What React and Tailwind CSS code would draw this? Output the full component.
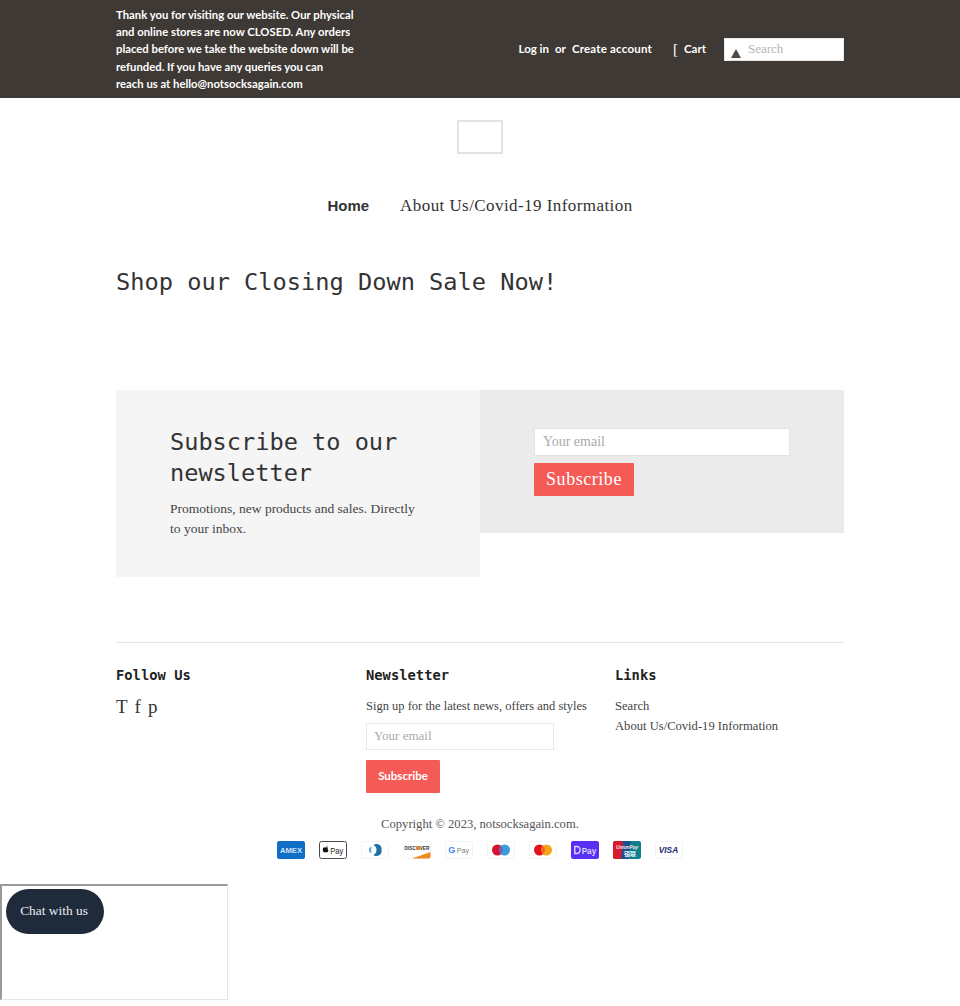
const serif = "font-['Liberation_Serif',serif]";
const mono = "font-['DejaVu_Sans_Mono',monospace]";
const sans = "font-['Lato','Open_Sans',sans-serif]";

function Card({ children }) {
  return <svg width="28" height="18" viewBox="0 0 28 18" className="block">{children}</svg>;
}

const cardBase = <rect x="0.5" y="0.5" width="27" height="17" rx="2" fill="#fff" stroke="#f3f3f3" />;

function Amex() {
  return (
    <Card>
      <rect width="28" height="18" rx="2" fill="#0f6fc6" />
      <text x="3" y="11.8" textLength="22" lengthAdjust="spacingAndGlyphs" fontSize="7.6" fontWeight="700" fill="#cfe3f7" fontFamily="Liberation Sans">AMEX</text>
    </Card>
  );
}
function ApplePay() {
  return (
    <Card>
      <rect x="0.5" y="0.5" width="27" height="17" rx="2" fill="#fff" stroke="#4a4a4a" />
      <path d="M7.4 6.2c.8 0 1.300.4 1.800.4-.8.6-.8 2.400.3 2.900-.4 1-1 1.900-1.600 1.900-.5 0-.7-.3-1.200-.3s-.7.3-1.200.3c-.9 0-1.700-1.600-1.700-2.900 0-1.400.9-2.200 1.800-2.200.6 0 .9.300 1.200.300z" fill="#111" />
      <path d="M7.400 5.900c0-.7.500-1.200 1.100-1.300 0 .7-.5 1.300-1.100 1.300z" fill="#111" />
      <text x="11.300" y="12.700" textLength="13" lengthAdjust="spacingAndGlyphs" fontSize="9.500" fill="#222" fontFamily="Liberation Sans">Pay</text>
    </Card>
  );
}
function Diners() {
  return (
    <Card>
      {cardBase}
      <path d="M10.300 5.200a4.200 4.200 0 0 0 0 7.600z" fill="#6fa7d1" />
      <path d="M12.500 4.100a5 5 0 0 1 8 4.900 5 5 0 0 1-8 4.900 5.500 5.500 0 0 0 0-9.800z" fill="#1f6ea8" />
    </Card>
  );
}
function Discover() {
  return (
    <Card>
      {cardBase}
      <path d="M9 17.500 27.500 11V15.500a2 2 0 0 1-2 2z" fill="#ef8a23" />
      <text x="1.500" y="8.700" textLength="25" lengthAdjust="spacingAndGlyphs" fontSize="4.900" fontWeight="700" fill="#333" fontFamily="Liberation Sans">DISCOVER</text>
      <circle cx="15.800" cy="7" r="2" fill="#ef8a23" />
    </Card>
  );
}
function GPay() {
  return (
    <Card>
      {cardBase}
      <text x="3.300" y="12" fontSize="9" fontWeight="700" fill="#4285f4" fontFamily="Liberation Sans">G</text>
      <text x="11.700" y="12" textLength="12.300" lengthAdjust="spacingAndGlyphs" fontSize="8" fill="#7a7f87" fontFamily="Liberation Sans">Pay</text>
    </Card>
  );
}
function Maestro() {
  return (
    <Card>
      {cardBase}
      <circle cx="10.500" cy="9" r="5.500" fill="#d8102c" />
      <circle cx="17.500" cy="9" r="5.500" fill="#3a9be0" />
      <path d="M14 4.800a5.500 5.500 0 0 1 0 8.400 5.500 5.500 0 0 1 0-8.400z" fill="#7a5fb0" />
    </Card>
  );
}
function Master() {
  return (
    <Card>
      {cardBase}
      <circle cx="10.500" cy="9" r="5.500" fill="#e3101e" />
      <circle cx="17.500" cy="9" r="5.500" fill="#f7a21b" />
      <path d="M14 4.800a5.500 5.500 0 0 1 0 8.400 5.500 5.500 0 0 1 0-8.400z" fill="#f4641c" />
    </Card>
  );
}
function ShopPay() {
  return (
    <Card>
      <rect width="28" height="18" rx="2" fill="#5a31f4" />
      <path d="M3.800 5.500h2a3.300 3.500 0 0 1 0 7h-2z" fill="none" stroke="#dcd5fd" strokeWidth="1.400" />
      <text x="10.700" y="12.500" textLength="14.500" lengthAdjust="spacingAndGlyphs" fontSize="8.800" fontWeight="700" fill="#dcd5fd" fontFamily="Liberation Sans">Pay</text>
    </Card>
  );
}
function UnionPay() {
  return (
    <Card>
      <rect width="28" height="18" rx="2" fill="#0f7f8c" />
      <path d="M2 0h10l-3 18H2a2 2 0 0 1-2-2V2a2 2 0 0 1 2-2z" fill="#d8192f" />
      <path d="M10 0h8l-3 18H8z" fill="#1c4f8f" />
      <text x="14" y="7.500" textAnchor="middle" fontSize="4.800" fontWeight="700" fontStyle="italic" fill="#fde2e2" fontFamily="Liberation Sans">UnionPay</text>
      <text x="17" y="14.500" textAnchor="middle" fontSize="6" fontWeight="700" fill="#e6f7f7" fontFamily="Noto Sans CJK SC">银联</text>
    </Card>
  );
}
function Visa() {
  return (
    <Card>
      {cardBase}
      <text x="3.700" y="12.300" textLength="19.500" lengthAdjust="spacingAndGlyphs" fontSize="8.800" fontWeight="700" fontStyle="italic" fill="#1a2a6c" fontFamily="Liberation Sans">VISA</text>
    </Card>
  );
}

export default function App() {
  return (
    <div className={`relative h-[1006px] overflow-hidden bg-white ${serif} text-[#333]`}>
      <header className="h-[98px] bg-[#3e3935] text-white">
        <div className={`mx-auto flex h-full w-[728px] items-center justify-between ${sans} font-bold`}>
          <p className="w-[250px] whitespace-nowrap text-[11.300px] leading-[17.300px]">
            Thank you for visiting our website. Our physical<br />
            and online stores are now CLOSED. Any orders<br />
            placed before we take the website down will be<br />
            refunded. If you have any queries you can<br />
            reach us at hello@notsocksagain.com
          </p>
          <div className="flex items-center text-[11.500px]">
            <span>Log in</span>
            <span className="ml-[6px]">or</span>
            <span className="ml-[6px] tracking-[0.2px]">Create account</span>
            <span className={`ml-[21px] ${serif} text-[15px] font-normal leading-none`}>[</span>
            <span className="ml-[6px]">Cart</span>
            <div className="relative ml-[18px] flex h-[23px] w-[120px] items-center border border-[#e8e8e8] bg-white pl-[23px]">
              <svg width="10" height="9" viewBox="0 0 10 9" className="absolute left-[6px] top-[10px]"><path d="M5 0 10 9H0z" fill="#4f4a45" /></svg>
              <span className={`${serif} text-[13px] font-normal text-[#b5b5b5]`}>Search</span>
            </div>
          </div>
        </div>
      </header>

      <div className="mt-[22px] flex justify-center">
        <div className="h-[34px] w-[46px] border-2 border-[#e3e3e3]" />
      </div>

      <nav className="mt-[41px] flex items-center justify-center gap-[31px] text-[#333]">
        <a className="font-['Liberation_Sans',sans-serif] text-[15px] font-bold leading-[22px]">Home</a>
        <a className="text-[17px] leading-[22px] tracking-[0.43px]">About Us/Covid-19 Information</a>
      </nav>

      <main className="mx-auto w-[728px]">
        <h1 className={`mt-[48px] ${mono} text-[23.650px] leading-[34px] text-[#333]`}>Shop our Closing Down Sale Now!</h1>

        <section className="mt-[91px] flex items-start">
          <div className="h-[187px] w-[364px] bg-[#f5f5f5] px-[54px] pt-[37px]">
            <h2 className={`${mono} text-[23.600px] leading-[31px]`}>Subscribe to our newsletter</h2>
            <p className="mt-[10px] text-[13.500px] leading-[20px] text-[#444]">Promotions, new products and sales. Directly to your inbox.</p>
          </div>
          <div className="h-[143px] w-[364px] bg-[#ebebeb] px-[54px] pt-[38px]">
            <div className="flex h-[28px] items-center border border-[#e3e3e3] bg-white px-[8px] pb-[1px] text-[14px] text-[#aaa]">Your email</div>
            <button className="mt-[7px] block h-[33px] w-[100px] rounded-[1px] bg-[#f45b57] text-[18px] tracking-[0.55px] text-white">Subscribe</button>
          </div>
        </section>

        <footer className="mt-[65px] border-t border-[#e3e3e3] pt-[22px]">
          <div className="grid grid-cols-[250px_249px_1fr]">
            <div>
              <h3 className={`${mono} text-[13.800px] font-bold leading-[20px] text-[#222]`}>Follow Us</h3>
              <div className="mt-[10px] flex gap-[7px] text-[19px] leading-[24px]">
                <span>T</span><span>f</span><span>p</span>
              </div>
            </div>
            <div>
              <h3 className={`${mono} text-[13.800px] font-bold leading-[20px] text-[#222]`}>Newsletter</h3>
              <p className="mt-[11px] whitespace-nowrap text-[12.500px] leading-[20px] text-[#444]">Sign up for the latest news, offers and styles</p>
              <div className="mt-[7px] flex h-[27px] w-[188px] items-center border border-[#e8e8e8] px-[7px] pb-[1px] text-[13px] text-[#aaa]">Your email</div>
              <button className={`mt-[10px] block h-[33px] w-[74px] rounded-[1px] bg-[#f45b57] ${sans} pb-[1px] text-[11.500px] font-bold text-white`}>Subscribe</button>
            </div>
            <div>
              <h3 className={`${mono} text-[13.800px] font-bold leading-[20px] text-[#222]`}>Links</h3>
              <ul className="mt-[11px] text-[12.600px] leading-[20px] text-[#444]">
                <li>Search</li>
                <li>About Us/Covid-19 Information</li>
              </ul>
            </div>
          </div>
          <p className="mt-[21px] text-center text-[12.600px] leading-[20px] text-[#555]">Copyright © 2023, notsocksagain.com.</p>
          <div className="mt-[7px] flex justify-center gap-[14px]">
            <Amex /><ApplePay /><Diners /><Discover /><GPay /><Maestro /><Master /><ShopPay /><UnionPay /><Visa />
          </div>
        </footer>
      </main>

      <div className="absolute left-0 top-[884px] h-[116px] w-[228px] border-t-2 border-l-2 border-r border-b border-t-[#9a9a9a] border-l-[#9a9a9a] border-r-[#e5e5e5] border-b-[#e5e5e5] bg-white">
        <button className="absolute left-[4px] top-[3px] flex h-[45px] w-[98px] items-center justify-center rounded-[23px] bg-[#1f2b3b] pr-[2px] text-[13.400px] text-[#e8ecf0]">Chat with us</button>
      </div>
    </div>
  );
}
